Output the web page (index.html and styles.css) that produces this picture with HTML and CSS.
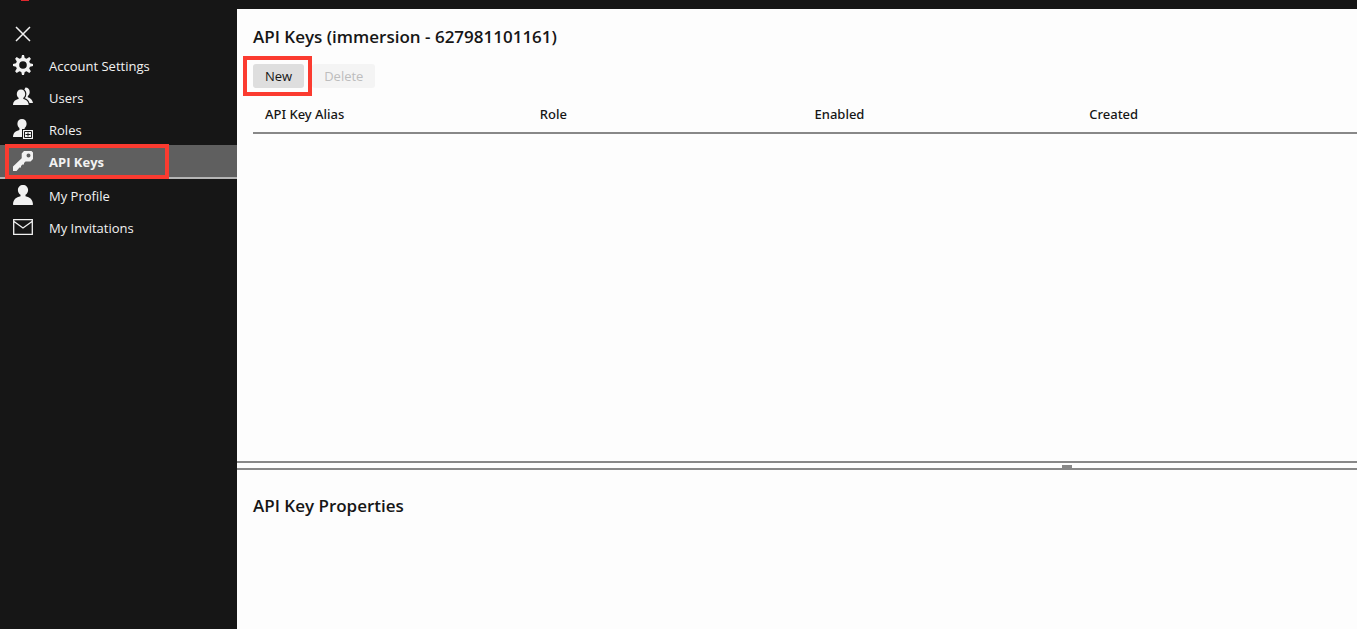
FILE: index.html
```html
<!DOCTYPE html>
<html lang="en">

<head>
  <meta charset="UTF-8">
  <meta name="viewport" content="width=device-width, initial-scale=1.0">
  <title>API Keys</title>
  <link rel="stylesheet" href="styles.css">
</head>

<body>
  <!-- Top bar -->
  <header class="topbar">
    <span class="topbar-mark"></span>
  </header>

  <div class="layout">
    <!-- Sidebar -->
    <nav class="sidebar">
      <button type="button" class="nav-close" aria-label="Close menu">
        <svg class="icon" viewBox="0 0 20 20"><path d="M3 3l14 14M17 3L3 17" fill="none" stroke="currentColor" stroke-width="1.5"/></svg>
      </button>
      <a href="#settings" class="nav-item">
        <svg class="icon" viewBox="0 0 20 20">
          <path fill-rule="evenodd" fill="currentColor" d="M9 0h2l.7 3 1.900.8 2.700-1.700 1.600 1.600-1.700 2.700.8 1.900 3 .7v2l-3 .7-.8 1.900 1.700 2.700-1.600 1.600-2.700-1.700-1.900.8-.7 3H9l-.7-3-1.900-.8-2.700 1.700-1.600-1.600 1.700-2.700L3 11.700 0 11V9l3-.7.8-1.900-1.700-2.700 1.600-1.600 2.700 1.700L8.300 3zM10 6.200a3.800 3.800 0 1 0 0 7.600 3.800 3.800 0 0 0 0-7.600z"/>
        </svg>
        <span class="nav-label">Account Settings</span>
      </a>
      <a href="#users" class="nav-item">
        <svg class="icon" viewBox="0 0 20 20">
          <path fill="currentColor" d="M12.500.6c2.500 0 4.200 1.800 4.200 4.300 0 1.800-.7 3.100-1.900 4v1.300c2.600 1 4.800 2.500 5.200 5.800H10V5z"/>
          <path fill="currentColor" stroke="#161616" stroke-width="2.400" paint-order="stroke" d="M8 2.500c2.500 0 4.200 1.900 4.200 4.400 0 1.700-.8 3.100-1.900 3.900V12c3 .8 5.100 2.200 5.400 6H0c.2-3.800 2.400-5.200 5.600-6v-1.200C4.500 10 3.800 8.600 3.800 6.900 3.800 4.400 5.500 2.500 8 2.500z"/>
        </svg>
        <span class="nav-label">Users</span>
      </a>
      <a href="#roles" class="nav-item">
        <svg class="icon" viewBox="0 0 20 20">
          <path fill="currentColor" d="M9 0c2.700 0 4.600 2 4.600 4.700 0 1.800-.8 3.300-2 4.300V10H9v8H0c.2-4.500 2.600-6 6.400-7V9C5.200 8 4.400 6.500 4.400 4.700 4.400 2 6.300 0 9 0z"/>
          <path fill="currentColor" stroke="#161616" stroke-width="2" paint-order="stroke" d="M10 11h10v9H10z"/>
          <path fill="none" stroke="#161616" d="M11.500 12.500h7v6h-7z"/>
          <path fill="none" stroke="#161616" d="M15 13.500v4M12.500 15.500h5"/>
        </svg>
        <span class="nav-label">Roles</span>
      </a>
      <a href="#api-keys" class="nav-item active" aria-current="page">
        <svg class="icon" viewBox="0 0 20 20">
          <path fill-rule="evenodd" fill="currentColor" d="M11 0h7.500L20 1.500V8l-2.500 2.500h-5L11 12v1.500H9.500L8 15v1.500H6.500L3.500 20H0v-4.500L8.700 7.200V2.500zM15.500 2.500a2 2 0 1 0 0 4 2 2 0 0 0 0-4z"/>
        </svg>
        <span class="nav-label">API Keys</span>
        <span class="highlight"></span>
      </a>
      <a href="#profile" class="nav-item">
        <svg class="icon" viewBox="0 0 20 20">
          <path fill="currentColor" d="M10 0c3 0 5.100 2.100 5.100 5 0 2.200-1 3.800-2.600 4.800v1.400c4.500 1 7.300 3.200 7.500 8.300L19.500 20H.5l-.5-.5c.2-5.100 3-7.300 7.500-8.300V9.800C5.900 8.800 4.900 7.200 4.900 5c0-2.900 2.100-5 5.100-5z"/>
        </svg>
        <span class="nav-label">My Profile</span>
      </a>
      <a href="#invitations" class="nav-item">
        <svg class="icon" viewBox="0 0 20 20">
          <path fill="none" stroke="currentColor" stroke-width="1.300" d="M.7 2.700h18.600v14.600H.7zM1 4.500l9 6.500 9-6.500"/>
        </svg>
        <span class="nav-label">My Invitations</span>
      </a>
    </nav>

    <!-- Main content -->
    <main class="content">
      <section class="keys">
        <h1>API Keys (immersion - 627981101161)</h1>
        <div class="toolbar">
          <div class="marked">
            <button type="button" class="btn">New</button>
            <span class="highlight"></span>
          </div>
          <button type="button" class="btn" disabled>Delete</button>
        </div>
        <div class="table-wrap">
          <table>
            <thead>
              <tr>
                <th scope="col">API Key Alias</th>
                <th scope="col">Role</th>
                <th scope="col">Enabled</th>
                <th scope="col">Created</th>
              </tr>
            </thead>
          </table>
        </div>
      </section>

      <div class="splitter"><span class="grip"></span></div>

      <section class="properties">
        <h2>API Key Properties</h2>
      </section>
    </main>
  </div>
</body>

</html>
```

FILE: styles.css
```css
/* General Styles */
* {
  box-sizing: border-box;
}

body {
  margin: 0;
  min-height: 100vh;
  display: flex;
  flex-direction: column;
  font-family: "Segoe UI", "Open Sans", "Noto Sans", sans-serif;
  font-size: 13px;
  line-height: 20px;
  color: #161616;
  background-color: #fdfdfd;
  overflow-x: hidden;
}

button {
  font: inherit;
  color: inherit;
  border: none;
}

/* Top bar */
.topbar {
  height: 9px;
  padding-left: 21px;
  background-color: #161616;
}

.topbar-mark {
  display: block;
  width: 8px;
  height: 1px;
  background-color: #e0282e;
}

.layout {
  flex: 1;
  display: flex;
}

/* Sidebar */
.sidebar {
  flex: 0 0 237px;
  padding-top: 8px;
  color: #f2f2f2;
  background-color: #161616;
}

.nav-close {
  display: flex;
  align-items: center;
  height: 32px;
  padding: 2px 13px 0;
  background: none;
  cursor: pointer;
}

.nav-item {
  position: relative;
  display: flex;
  align-items: center;
  gap: 16px;
  height: 32px;
  padding: 0 13px;
  color: inherit;
  text-decoration: none;
}

.nav-item.active {
  height: 34px;
  font-weight: 700;
  background-color: #5f5f5f;
  border-bottom: 2px solid #b5b5b5;
}

.nav-label {
  padding-top: 2px;
}

.icon {
  width: 20px;
  height: 20px;
}

/* Red frames around the steps to follow */
.highlight {
  position: absolute;
  border: 4px solid #fb3b30;
  pointer-events: none;
}

.nav-item .highlight {
  top: -1px;
  bottom: -2px;
  left: 5px;
  width: 164px;
}

.marked {
  position: relative;
}

.marked .highlight {
  top: -8px;
  right: -8px;
  bottom: -8px;
  left: -10px;
  z-index: 1;
}

/* Main content */
.content {
  flex: 1;
  min-width: 0;
  display: flex;
  flex-direction: column;
}

h1,
h2 {
  margin: 0;
  font-size: 17px;
  font-weight: 600;
  line-height: 24px;
}

.keys {
  flex: 42;
  padding: 16px 0 0 16px;
}

.toolbar {
  display: flex;
  gap: 8px;
  margin-top: 15px;
}

.btn {
  display: block;
  height: 24px;
  padding: 0 12px;
  border-radius: 3px;
  background-color: #dedede;
  cursor: pointer;
}

.btn:disabled {
  color: #bdbdbd;
  background-color: #f4f4f4;
  cursor: default;
}

/* Keys table */
.table-wrap {
  margin-top: 8px;
  padding-right: 5px;
  border-bottom: 2px solid #888;
}

table {
  width: 100%;
  table-layout: fixed;
  border-collapse: collapse;
}

th {
  padding: 8px 12px;
  font-family: "Segoe UI", "Noto Sans", sans-serif;
  font-weight: 500;
  text-align: left;
}

/* Splitter */
.splitter {
  height: 9px;
  border-top: 2px solid #888;
  border-bottom: 2px solid #888;
  padding-top: 2px;
}

.grip {
  display: block;
  width: 10px;
  height: 3px;
  margin-left: calc(74% - 4px);
  background-color: #888;
}

.properties {
  flex: 13;
  padding: 24px 16px 0;
}
```
